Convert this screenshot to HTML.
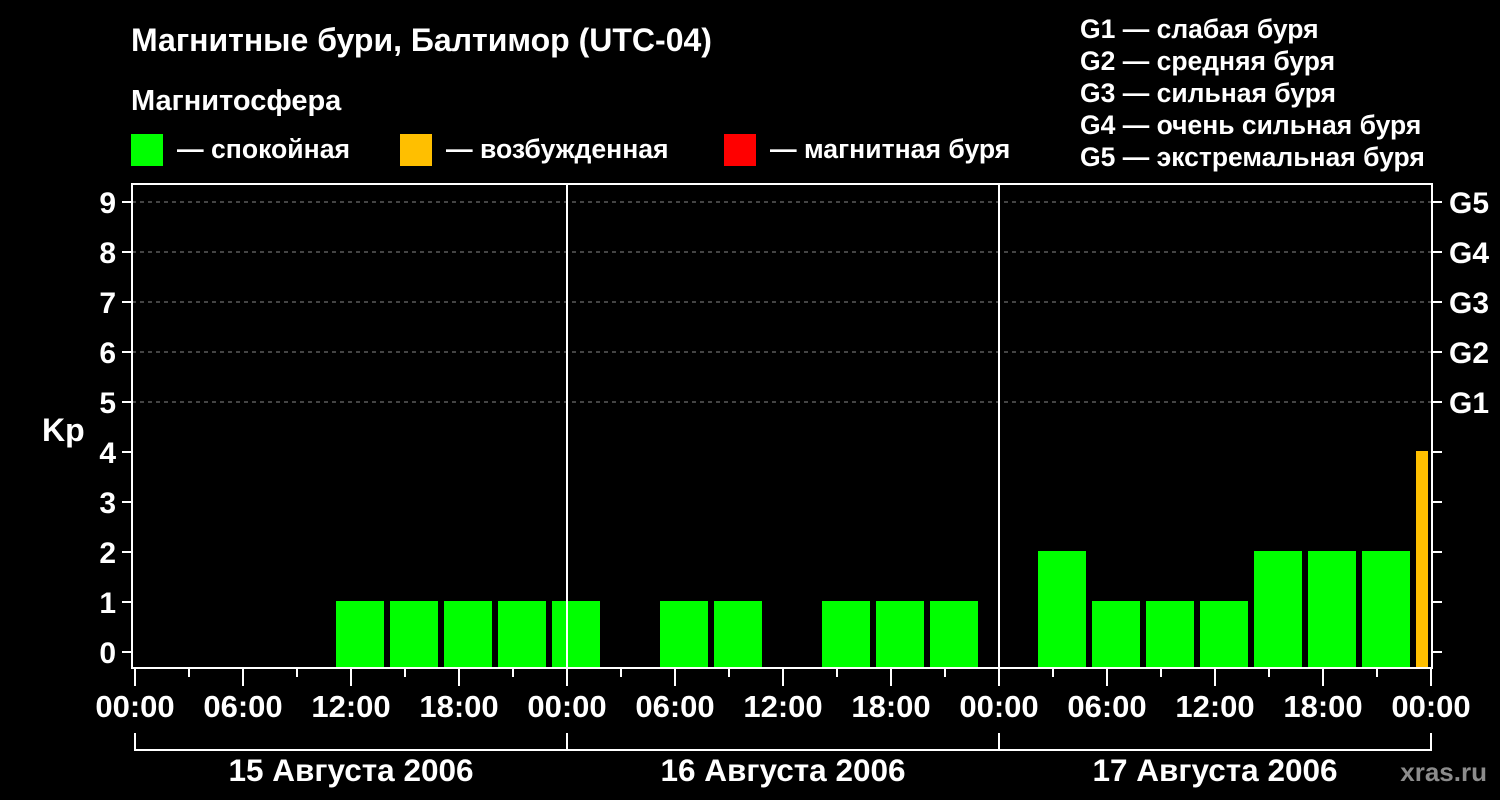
<!DOCTYPE html>
<html><head><meta charset="utf-8"><style>
html,body{margin:0;padding:0;background:#000;width:1500px;height:800px;overflow:hidden}
svg{display:block}
text{font-family:"Liberation Sans",Arial,sans-serif;font-weight:bold;fill:#fff}
</style></head><body>
<svg width="1500" height="800" viewBox="0 0 1500 800" xmlns="http://www.w3.org/2000/svg">
<rect width="1500" height="800" fill="#000"/>
<text x="131" y="51" font-size="32">Магнитные бури, Балтимор (UTC-04)</text>
<text x="131" y="110" font-size="29">Магнитосфера</text>
<rect x="131" y="134" width="32" height="32" fill="#00ff00"/>
<text x="177" y="158" font-size="26.6">— спокойная</text>
<rect x="400" y="134" width="32" height="32" fill="#ffbf00"/>
<text x="446" y="158" font-size="26.6">— возбужденная</text>
<rect x="724" y="134" width="32" height="32" fill="#ff0000"/>
<text x="770" y="158" font-size="26.6">— магнитная буря</text>
<g font-size="26.5">
<text x="1080" y="38">G1 — слабая буря</text>
<text x="1080" y="70">G2 — средняя буря</text>
<text x="1080" y="102">G3 — сильная буря</text>
<text x="1080" y="134">G4 — очень сильная буря</text>
<text x="1080" y="166">G5 — экстремальная буря</text>
</g>
<g stroke="#888" stroke-dasharray="4,4" stroke-width="1">
<line x1="132" y1="402" x2="1432" y2="402"/>
<line x1="132" y1="352" x2="1432" y2="352"/>
<line x1="132" y1="302" x2="1432" y2="302"/>
<line x1="132" y1="252" x2="1432" y2="252"/>
<line x1="132" y1="202" x2="1432" y2="202"/>
</g>
<g fill="#00ff00">
<rect x="336" y="601" width="48" height="67"/>
<rect x="390" y="601" width="48" height="67"/>
<rect x="444" y="601" width="48" height="67"/>
<rect x="498" y="601" width="48" height="67"/>
<rect x="552" y="601" width="48" height="67"/>
<rect x="660" y="601" width="48" height="67"/>
<rect x="714" y="601" width="48" height="67"/>
<rect x="822" y="601" width="48" height="67"/>
<rect x="876" y="601" width="48" height="67"/>
<rect x="930" y="601" width="48" height="67"/>
<rect x="1038" y="551" width="48" height="117"/>
<rect x="1092" y="601" width="48" height="67"/>
<rect x="1146" y="601" width="48" height="67"/>
<rect x="1200" y="601" width="48" height="67"/>
<rect x="1254" y="551" width="48" height="117"/>
<rect x="1308" y="551" width="48" height="117"/>
<rect x="1362" y="551" width="48" height="117"/>
</g>
<rect x="1416" y="451" width="12" height="217" fill="#ffbf00"/>
<g stroke="#fff" stroke-width="2" fill="none">
<rect x="132" y="184" width="1300" height="484"/>
<line x1="567" y1="184" x2="567" y2="668"/>
<line x1="999" y1="184" x2="999" y2="668"/>
</g>
<g stroke="#fff" stroke-width="2">
<line x1="122" y1="652" x2="132" y2="652"/><line x1="122" y1="602" x2="132" y2="602"/>
<line x1="122" y1="552" x2="132" y2="552"/><line x1="122" y1="502" x2="132" y2="502"/>
<line x1="122" y1="452" x2="132" y2="452"/><line x1="122" y1="402" x2="132" y2="402"/>
<line x1="122" y1="352" x2="132" y2="352"/><line x1="122" y1="302" x2="132" y2="302"/>
<line x1="122" y1="252" x2="132" y2="252"/><line x1="122" y1="202" x2="132" y2="202"/>
<line x1="1432" y1="652" x2="1442" y2="652"/><line x1="1432" y1="602" x2="1442" y2="602"/>
<line x1="1432" y1="552" x2="1442" y2="552"/><line x1="1432" y1="502" x2="1442" y2="502"/>
<line x1="1432" y1="452" x2="1442" y2="452"/><line x1="1432" y1="402" x2="1442" y2="402"/>
<line x1="1432" y1="352" x2="1442" y2="352"/><line x1="1432" y1="302" x2="1442" y2="302"/>
<line x1="1432" y1="252" x2="1442" y2="252"/><line x1="1432" y1="202" x2="1442" y2="202"/>
</g>
<g font-size="30" text-anchor="end">
<text x="116" y="663">0</text><text x="116" y="613">1</text><text x="116" y="563">2</text>
<text x="116" y="513">3</text><text x="116" y="463">4</text><text x="116" y="413">5</text>
<text x="116" y="363">6</text><text x="116" y="313">7</text><text x="116" y="263">8</text>
<text x="116" y="213">9</text>
</g>
<text x="42" y="441" font-size="32">Kp</text>
<g font-size="30">
<text x="1449" y="413">G1</text><text x="1449" y="363">G2</text><text x="1449" y="313">G3</text>
<text x="1449" y="263">G4</text><text x="1449" y="213">G5</text>
</g>
<g font-size="31" text-anchor="middle">
<text x="135" y="717">00:00</text><text x="243" y="717">06:00</text><text x="351" y="717">12:00</text>
<text x="459" y="717">18:00</text><text x="567" y="717">00:00</text><text x="675" y="717">06:00</text>
<text x="783" y="717">12:00</text><text x="891" y="717">18:00</text><text x="999" y="717">00:00</text>
<text x="1107" y="717">06:00</text><text x="1215" y="717">12:00</text><text x="1323" y="717">18:00</text>
<text x="1431" y="717">00:00</text>
</g>
<g stroke="#fff" stroke-width="2" fill="none">
<path d="M135 733V750H1431V733M567 733V750M999 733V750"/>
</g>
<g font-size="31.5" text-anchor="middle">
<text x="351" y="781">15 Августа 2006</text>
<text x="783" y="781">16 Августа 2006</text>
<text x="1215" y="781">17 Августа 2006</text>
</g>
<text x="1487" y="781" font-size="26" text-anchor="end" style="fill:#8c8c8c">xras.ru</text>
<g stroke="#fff" stroke-width="2">
<line x1="135" y1="668" x2="135" y2="686"/><line x1="189" y1="668" x2="189" y2="677"/>
<line x1="243" y1="668" x2="243" y2="686"/><line x1="297" y1="668" x2="297" y2="677"/>
<line x1="351" y1="668" x2="351" y2="686"/><line x1="405" y1="668" x2="405" y2="677"/>
<line x1="459" y1="668" x2="459" y2="686"/><line x1="513" y1="668" x2="513" y2="677"/>
<line x1="567" y1="668" x2="567" y2="686"/><line x1="621" y1="668" x2="621" y2="677"/>
<line x1="675" y1="668" x2="675" y2="686"/><line x1="729" y1="668" x2="729" y2="677"/>
<line x1="783" y1="668" x2="783" y2="686"/><line x1="837" y1="668" x2="837" y2="677"/>
<line x1="891" y1="668" x2="891" y2="686"/><line x1="945" y1="668" x2="945" y2="677"/>
<line x1="999" y1="668" x2="999" y2="686"/><line x1="1053" y1="668" x2="1053" y2="677"/>
<line x1="1107" y1="668" x2="1107" y2="686"/><line x1="1161" y1="668" x2="1161" y2="677"/>
<line x1="1215" y1="668" x2="1215" y2="686"/><line x1="1269" y1="668" x2="1269" y2="677"/>
<line x1="1323" y1="668" x2="1323" y2="686"/><line x1="1377" y1="668" x2="1377" y2="677"/>
<line x1="1431" y1="668" x2="1431" y2="686"/>
</g>
</svg>
</body></html>
